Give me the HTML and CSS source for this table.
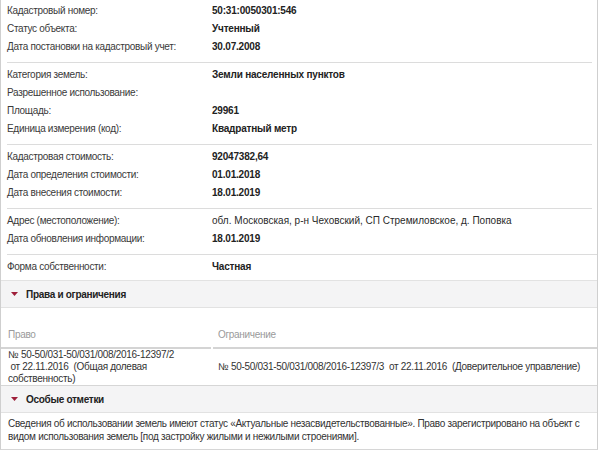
FILE: index.html
```html
<!DOCTYPE html>
<html lang="ru">

<head>
  <meta charset="UTF-8" />
  <meta name="viewport" content="width=device-width, initial-scale=1.0" />
  <title>Объект недвижимости</title>
  <link rel="stylesheet" href="styles.css">
</head>

<body>
  <div class="card">
    <!-- основные сведения -->
    <div class="group first">
      <div class="row"><span class="label">Кадастровый номер:</span><span class="value">50:31:0050301:546</span></div>
      <div class="row"><span class="label">Статус объекта:</span><span class="value">Учтенный</span></div>
      <div class="row"><span class="label">Дата постановки на кадастровый учет:</span><span class="value">30.07.2008</span></div>
    </div>
    <div class="group">
      <div class="row"><span class="label">Категория земель:</span><span class="value">Земли населенных пунктов</span></div>
      <div class="row"><span class="label">Разрешенное использование:</span><span class="value"></span></div>
      <div class="row"><span class="label">Площадь:</span><span class="value">29961</span></div>
      <div class="row"><span class="label">Единица измерения (код):</span><span class="value">Квадратный метр</span></div>
    </div>
    <div class="group">
      <div class="row"><span class="label">Кадастровая стоимость:</span><span class="value">92047382,64</span></div>
      <div class="row"><span class="label">Дата определения стоимости:</span><span class="value">01.01.2018</span></div>
      <div class="row"><span class="label">Дата внесения стоимости:</span><span class="value">18.01.2019</span></div>
    </div>
    <div class="group wide">
      <div class="row"><span class="label">Адрес (местоположение):</span><span class="value normal">обл. Московская, р-н Чеховский, СП Стремиловское, д. Поповка</span></div>
      <div class="row"><span class="label">Дата обновления информации:</span><span class="value">18.01.2019</span></div>
    </div>
    <div class="group last">
      <div class="row"><span class="label">Форма собственности:</span><span class="value">Частная</span></div>
    </div>

    <!-- права -->
    <div class="section">
      <svg class="arrow" width="7" height="4" viewBox="0 0 7 4"><path d="M0 0h7L3.5 4z" fill="#9e1f3a"/></svg>
      <span>Права и ограничения</span>
    </div>
    <div class="rights">
      <div class="th">Право</div>
      <div class="th right">Ограничение</div>
      <div class="td">№ 50-50/031-50/031/008/2016-12397/2 &nbsp;от&nbsp;22.11.2016 &nbsp;(Общая долевая собственность)</div>
      <div class="td right mid">№ 50-50/031-50/031/008/2016-12397/3 &nbsp;от 22.11.2016 &nbsp;(Доверительное управление)</div>
    </div>

    <!-- особые отметки -->
    <div class="section second">
      <svg class="arrow" width="7" height="4" viewBox="0 0 7 4"><path d="M0 0h7L3.5 4z" fill="#9e1f3a"/></svg>
      <span>Особые отметки</span>
    </div>
    <p class="notes">Сведения об использовании земель имеют статус «Актуальные незасвидетельствованные». Право зарегистрировано на объект с видом использования земель [под застройку жилыми и нежилыми строениями].</p>
  </div>
</body>

</html>
```

FILE: styles.css
```css
* {
  margin: 0;
  padding: 0;
  box-sizing: border-box;
}

body {
  background: #fff;
  font-family: "Liberation Sans", Arial, sans-serif;
  font-size: 10px;
  letter-spacing: -0.3px;
  color: #333;
}

.card {
  width: 598px;
  border-left: 1px solid #cfcfcf;
  border-right: 1px solid #cfcfcf;
  border-bottom: 1px solid #d6d6d6;
}

/* строки с атрибутами */
.group {
  margin: 0 5px 0 6px;
  padding: 3px 0 6px;
  border-bottom: 1px solid #dcdcdc;
}

.group.first {
  padding-top: 2px;
}

.group.wide {
  margin-right: 0;
}

.group.last {
  border-bottom: none;
  padding-bottom: 4px;
}

.row {
  display: grid;
  grid-template-columns: 205px 1fr;
  height: 18px;
  line-height: 18px;
}

.label {
  color: #3a3a3a;
}

.value {
  font-weight: bold;
  color: #222;
  letter-spacing: -0.2px;
}

.value.normal {
  font-weight: normal;
  color: #2a2a2a;
  letter-spacing: 0;
}

/* заголовки разделов */
.section {
  display: flex;
  align-items: center;
  gap: 8px;
  height: 28px;
  padding-left: 10px;
  background: #f4f4f5;
  border-top: 1px solid #e2e2e2;
  border-bottom: 1px solid #e2e2e2;
  font-weight: bold;
  color: #222;
}

.section.second {
  border-top: none;
  height: 27px;
}

.arrow {
  display: block;
}

/* таблица прав */
.rights {
  display: grid;
  grid-template-columns: 210px 1fr;
  column-gap: 2px;
  border-bottom: 1px solid #d6d6d6;
}

.th {
  padding: 21px 7px 6px;
  line-height: 12px;
  color: #9a9a9a;
  border-bottom: 2px solid #d4d4d4;
}

.th.right,
.td.right {
  padding-left: 5px;
}

.td {
  padding: 0 7px;
  line-height: 12px;
  color: #333;
}

.td.mid {
  align-self: center;
}

.notes {
  padding: 4px 8px 6px 7px;
  line-height: 13px;
  color: #333;
}
```
